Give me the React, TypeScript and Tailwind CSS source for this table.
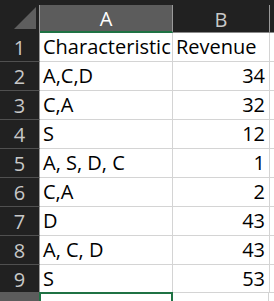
const rows = [
  { n: 1, a: "Characteristic", b: "Revenue", head: true },
  { n: 2, a: "A,C,D", b: "34" },
  { n: 3, a: "C,A", b: "32" },
  { n: 4, a: "S", b: "12" },
  { n: 5, a: "A, S, D, C", b: "1" },
  { n: 6, a: "C,A", b: "2" },
  { n: 7, a: "D", b: "43" },
  { n: 8, a: "A, C, D", b: "43" },
  { n: 9, a: "S", b: "53" },
];

const App = () => {
  return (
    <div
      className="w-[274px] h-[301px] overflow-hidden bg-[#212121] pt-[5px] text-[20px] leading-none"
      style={{ fontFamily: "'Open Sans', 'Liberation Sans', sans-serif" }}
    >
      <div className="flex h-[28px]">
        <div className="w-[40px] shrink-0 border-r border-[#9a9a9a] relative">
          <div className="absolute right-[3px] bottom-[4px] w-0 h-0 border-l-[22px] border-l-transparent border-b-[22px] border-b-[#5e5e5e]"></div>
        </div>
        <div className="w-[133px] shrink-0 bg-[#5c5c5c] border-r border-[#9a9a9a] border-b-2 border-b-[#1f7244] text-white flex items-center justify-center pt-[2px]">
          A
        </div>
        <div className="w-[97px] shrink-0 border-r border-[#9a9a9a] border-b border-b-[#8a8a8a] text-[#c8c8c8] flex items-center justify-center pt-[2px]">
          B
        </div>
        <div className="flex-1 border-b border-b-[#8a8a8a]"></div>
      </div>
      {rows.map((r) => (
        <div className="flex h-[29px]" key={r.n}>
          <div className="w-[40px] shrink-0 border-r border-[#9a9a9a] border-b border-b-[#505050] text-[#c8c8c8] flex items-center justify-center pt-[2px]">
            {r.n}
          </div>
          <div className="w-[133px] shrink-0 bg-white border-r border-b border-[#d4d4d4] text-black flex items-end pl-[3px] pb-[4px] whitespace-nowrap overflow-hidden">
            {r.a}
          </div>
          <div
            className={
              "w-[97px] shrink-0 bg-white border-r border-b border-[#d4d4d4] text-black flex items-end pb-[4px] whitespace-nowrap " +
              (r.head ? "pl-[3px]" : "justify-end pr-[4px]")
            }
          >
            {r.b}
          </div>
          <div className="flex-1 bg-white border-b border-[#d4d4d4]"></div>
        </div>
      ))}
      <div className="flex h-[29px] -mt-[2px]">
        <div className="w-[40px] shrink-0 bg-[#5c5c5c] border-r border-[#9a9a9a]"></div>
        <div className="w-[134px] shrink-0 bg-white border-2 border-[#1f7244] -ml-[1px]"></div>
        <div className="w-[96px] shrink-0 bg-white border-r border-t border-[#d4d4d4]"></div>
        <div className="flex-1 bg-white border-t border-[#d4d4d4]"></div>
      </div>
    </div>
  );
};

export default App;
